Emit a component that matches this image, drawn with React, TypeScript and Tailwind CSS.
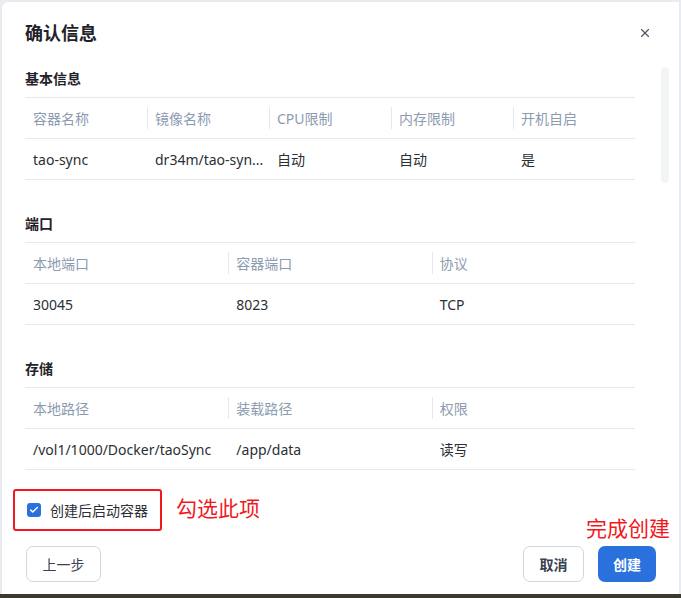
import { X, Check } from 'lucide-react';

const font = { fontFamily: '"Noto Sans", "Noto Sans CJK SC", sans-serif' };

type Section = {
  title: string;
  headers: string[];
  row: string[];
};

const sections: Section[] = [
  {
    title: '基本信息',
    headers: ['容器名称', '镜像名称', 'CPU限制', '内存限制', '开机自启'],
    row: ['tao-sync', 'dr34m/tao-syn...', '自动', '自动', '是'],
  },
  {
    title: '端口',
    headers: ['本地端口', '容器端口', '协议'],
    row: ['30045', '8023', 'TCP'],
  },
  {
    title: '存储',
    headers: ['本地路径', '装载路径', '权限'],
    row: ['/vol1/1000/Docker/taoSync', '/app/data', '读写'],
  },
];

function InfoTable({ s }: { s: Section }) {
  return (
    <div className="flex flex-col">
      <div className="h-[20px] leading-[20px] text-[14px] font-bold text-[#1f2329]">{s.title}</div>
      <div className="mt-[8px] w-[610px] border-t border-[#e5e8ed]">
        <div className="flex h-[41px] items-center border-b border-[#e5e8ed]">
          {s.headers.map((h, i) => (
            <div key={h} className="flex-1 flex items-center h-[22px] relative pl-[8px] text-[14px] text-[#8d9bb0]">
              {i > 0 && <span className="absolute left-0 top-0 h-[22px] w-px bg-[#e5e8ed]" />}
              {h}
            </div>
          ))}
        </div>
        <div className="flex h-[41px] items-center border-b border-[#e5e8ed]">
          {s.row.map((c, i) => (
            <div key={i} className="flex-1 pl-[8px] text-[14px] text-[#2b2f36] whitespace-nowrap">
              {c}
            </div>
          ))}
        </div>
      </div>
    </div>
  );
}

export default function App() {
  return (
    <div className="w-[681px] h-[598px] bg-[#e8ebef] flex flex-col overflow-hidden" style={font}>
      <div className="flex-1 pt-[2px] pl-[2px] pr-[2px]">
        <div className="relative h-full bg-white rounded-tl-[6px] flex flex-col">
          <div className="flex items-center justify-between pl-[23px] pr-[27px] pt-[18px] h-[44px]">
            <span className="text-[18px] font-bold text-[#1f2329] leading-[24px]">确认信息</span>
            <X size={14} strokeWidth={2} className="text-[#4b5563]" />
          </div>

          <div className="flex flex-col gap-[34px] pl-[23px] pt-[23px]">
            {sections.map((s) => (
              <InfoTable key={s.title} s={s} />
            ))}
          </div>

          <div className="absolute left-[659px] top-[65px] w-[8px] h-[116px] rounded-full bg-[#f3f4f6]" />

          <div className="pl-[11px] pt-[19px]">
            <div className="inline-flex items-center h-[42px] w-[149px] border-2 border-[#f0191e] rounded-[3px] pl-[12px] gap-[9px]">
              <span className="w-[14px] h-[14px] rounded-[3px] bg-[#2a71dd] flex items-center justify-center">
                <Check size={10} strokeWidth={3.5} className="text-white" />
              </span>
              <span className="text-[14px] text-[#2b2f36]">创建后启动容器</span>
            </div>
          </div>

          <div className="absolute left-[174px] top-[492px] text-[21px] leading-[28px] text-[#f0191e]">勾选此项</div>
          <div className="absolute left-[584px] top-[512px] text-[21px] leading-[28px] text-[#f0191e]">完成创建</div>

          <div className="flex items-center justify-between pl-[24px] pr-[23px] mt-[15px]">
            <button className="h-[36px] w-[75px] rounded-[7px] border border-[#d0d7e1] text-[14px] text-[#3a4150] bg-white">
              上一步
            </button>
            <div className="flex gap-[14px]">
              <button className="h-[36px] w-[61px] rounded-[7px] border border-[#d0d7e1] text-[14px] font-bold text-[#3a4150] bg-white">
                取消
              </button>
              <button className="h-[36px] w-[58px] rounded-[7px] bg-[#2a71dd] text-[14px] font-bold text-white">
                创建
              </button>
            </div>
          </div>
        </div>
      </div>
      <div className="h-[4px] bg-[#3b3a2c]" />
    </div>
  );
}
